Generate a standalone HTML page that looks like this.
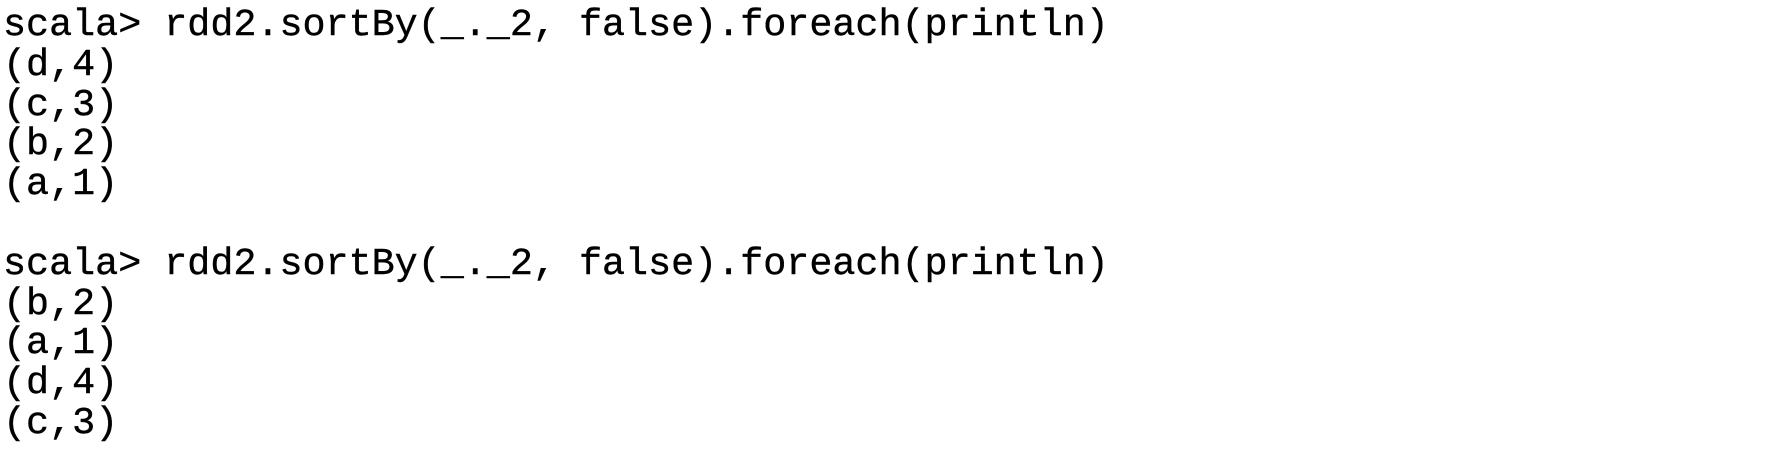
<!DOCTYPE html>
<html><head><style>
html,body{margin:0;padding:0;background:#fff;width:1774px;height:464px;overflow:hidden}
pre{margin:0;padding:6px 0 0 3px;font-family:"Liberation Mono",monospace;font-size:38.4px;line-height:39.8px;color:#000;-webkit-text-stroke:0.4px #000}
</style></head><body><pre>scala&gt; rdd2.sortBy(_._2, false).foreach(println)
(d,4)
(c,3)
(b,2)
(a,1)

scala&gt; rdd2.sortBy(_._2, false).foreach(println)
(b,2)
(a,1)
(d,4)
(c,3)</pre></body></html>
